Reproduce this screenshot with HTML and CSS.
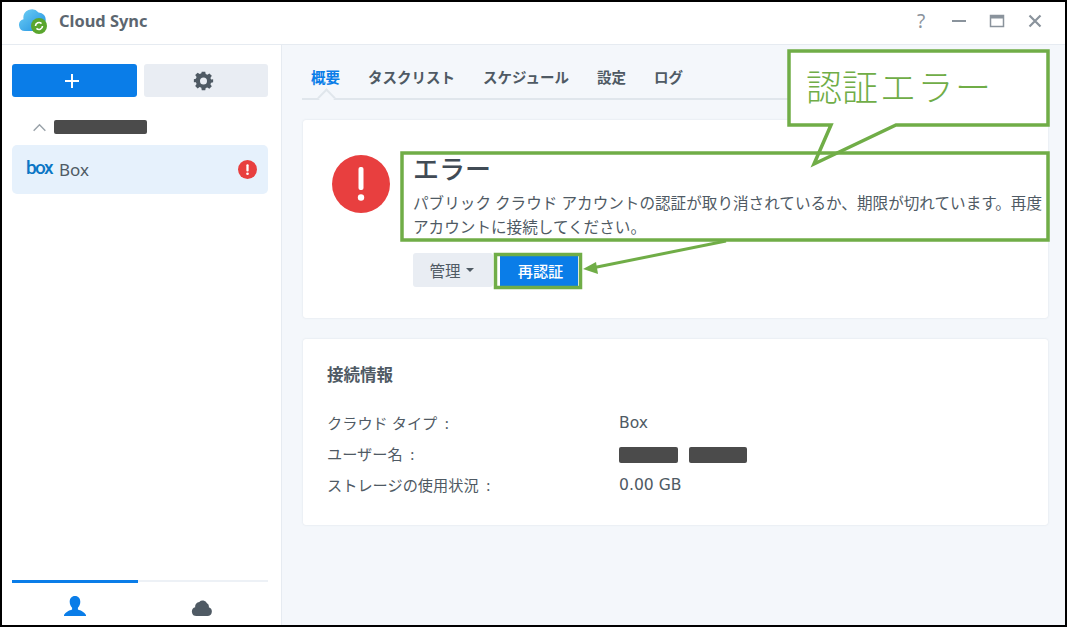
FILE: index.html
```html
<!DOCTYPE html>
<html lang="ja">
<head>
<meta charset="utf-8">
<title>Cloud Sync</title>
<link rel="stylesheet" href="styles.css">
</head>
<body>
<div class="stage">
  <div class="window">
    <header class="titlebar">
      <div class="brand">
        <svg class="logo" viewBox="0 0 32 28" width="32" height="28">
          <defs><linearGradient id="cl" x1="0" y1="0" x2="1" y2="1"><stop offset="0" stop-color="#6fd0f5"/><stop offset="1" stop-color="#1f8fe0"/></linearGradient></defs>
          <path d="M7 23a6 6 0 0 1-1.500-11.800A8.500 8.500 0 0 1 20.500 4.500 7 7 0 0 1 27.500 13c0 6-3 10-7 10z" fill="url(#cl)"/>
          <circle cx="21" cy="18" r="8" fill="#5aa62e"/>
          <path d="M17.500 18a3.500 3.500 0 0 1 6-2.400M24.500 18a3.500 3.500 0 0 1-6 2.400" fill="none" stroke="#fff" stroke-width="1.600"/>
        </svg>
        <span class="app-name">Cloud Sync</span>
      </div>
      <div class="controls">
        <span class="help">?</span>
        <svg class="ctl" viewBox="0 0 16 16" width="16" height="16"><rect x="1" y="7" width="14" height="2" fill="#8a939c"/></svg>
        <svg class="ctl" viewBox="0 0 16 16" width="16" height="16"><path d="M1.500 2.500h13v11h-13z" fill="none" stroke="#8a939c" stroke-width="1.500"/><rect x="1.500" y="2.500" width="13" height="3" fill="#8a939c"/></svg>
        <svg class="ctl" viewBox="0 0 16 16" width="16" height="16"><path d="M2.500 2.500l11 11M13.500 2.500l-11 11" stroke="#8a939c" stroke-width="2.200"/></svg>
      </div>
    </header>
    <div class="content">
      <aside class="sidebar">
        <div class="side-top">
          <div class="side-actions">
            <button class="btn-add"><svg viewBox="0 0 16 16" width="16" height="16"><path d="M8 1v14M1 8h14" stroke="#fff" stroke-width="2"/></svg></button>
            <button class="btn-gear">
              <svg viewBox="0 0 24 24" width="21" height="21"><path fill="#4f5a64" fill-rule="evenodd" d="M10 2h4l.5 2.700 1.900.8 2.300-1.600 2.800 2.800-1.600 2.300.8 1.900L23 10.500v3.500l-2.300.5-.8 1.900 1.600 2.300-2.800 2.800-2.300-1.600-1.900.8L14 23h-4l-.5-2.800-1.900-.8-2.300 1.600-2.800-2.800 1.600-2.300-.8-1.900L1 14v-3.500l2.300-.5.8-1.900-1.600-2.300 2.800-2.800 2.300 1.600 1.900-.8zM12 8.500a4 4 0 1 0 0 8 4 4 0 0 0 0-8z"/></svg>
            </button>
          </div>
          <div class="tree-head">
            <svg viewBox="0 0 16 10" width="15" height="9"><path d="M1.500 8.500L8 2l6.500 6.500" fill="none" stroke="#9aa2a9" stroke-width="1.600"/></svg>
            <span class="redact redact-side"></span>
          </div>
          <div class="tree-item">
            <span class="box-logo">box</span>
            <span class="tree-label">Box</span>
            <svg class="tree-alert" viewBox="0 0 20 20" width="19" height="19"><circle cx="10" cy="10" r="10" fill="#e83f3f"/><rect x="8.800" y="4.500" width="2.400" height="7.500" rx="1" fill="#fff"/><circle cx="10" cy="14.500" r="1.400" fill="#fff"/></svg>
          </div>
        </div>
        <nav class="side-tabs">
          <div class="side-tab active">
            <svg viewBox="0 0 24 22" width="24" height="22"><path fill="#0a7de8" d="M12 1c3.400 0 5.300 2.600 5.300 5.800 0 2.400-.9 4.500-2.400 5.900v1.700c2.700 1 6.600 2.400 8.100 5.600v1H1v-1c1.500-3.200 5.400-4.600 8.100-5.600v-1.700C7.600 11.300 6.700 9.200 6.700 6.800 6.700 3.600 8.600 1 12 1z"/></svg>
          </div>
          <div class="side-tab">
            <svg viewBox="0 0 24 22" width="24" height="20"><path fill="#4f5a64" d="M6 21a5 5 0 0 1-1.500-9.800A5 5 0 0 1 9 5.500a5.200 5.200 0 0 1 8.500 1.500 4 4 0 0 1 2 4.300A5 5 0 0 1 18 21z"/></svg>
          </div>
        </nav>
      </aside>
      <main class="main">
        <nav class="tabs">
          <span class="tab active">概要</span>
          <span class="tab">タスクリスト</span>
          <span class="tab">スケジュール</span>
          <span class="tab">設定</span>
          <span class="tab">ログ</span>
        </nav>
        <section class="card card-error">
          <svg class="err-icon" viewBox="0 0 58 58" width="58" height="58"><circle cx="29" cy="29" r="29" fill="#e83f3f"/><rect x="26.500" y="12" width="5" height="23" rx="2" fill="#fff"/><circle cx="29" cy="42.500" r="3.200" fill="#fff"/></svg>
          <div class="err-body">
            <h1 class="err-title">エラー</h1>
            <p class="err-text">パブリック クラウド アカウントの認証が取り消されているか、期限が切れています。再度<br>アカウントに接続してください。</p>
            <div class="err-actions">
              <button class="btn-manage">管理<i class="caret"></i></button>
              <button class="btn-reauth">再認証</button>
            </div>
          </div>
        </section>
        <section class="card card-info">
          <h2 class="info-title">接続情報</h2>
          <dl class="info-grid">
            <dt>クラウド タイプ&ensp;:</dt><dd>Box</dd>
            <dt>ユーザー名&ensp;:</dt><dd class="user"><span class="redact redact-a"></span><span class="redact redact-b"></span></dd>
            <dt>ストレージの使用状況&ensp;:</dt><dd>0.00 GB</dd>
          </dl>
        </section>
      </main>
    </div>
  </div>
  <svg class="annot" viewBox="0 0 1067 627" width="1067" height="627">
    <path d="M789 51H1048V125H896L814 164L831 125H789Z" fill="#fff" stroke="#70ad47" stroke-width="3.500"/>
    <rect x="402" y="153" width="646" height="87" fill="none" stroke="#70ad47" stroke-width="3.500"/>
    <rect x="495.500" y="254.500" width="85" height="33" fill="none" stroke="#70ad47" stroke-width="3.500"/>
    <path d="M726 241L592 268" stroke="#70ad47" stroke-width="3"/>
    <path d="M583 269L596 262L598 274Z" fill="#70ad47"/>
  </svg>
  <div class="callout-text">認証<span class="kata">エラー</span></div>
</div>
</body>
</html>
```

FILE: styles.css
```css
* { box-sizing: border-box; }
html, body { margin: 0; padding: 0; }
body {
  font-family: "Noto Sans", "Noto Sans CJK JP", sans-serif;
  color: #4f5a64;
  background: #fff;
}
button { font-family: inherit; border: 0; padding: 0; }

.stage { position: relative; width: 1067px; height: 627px; overflow: hidden; }
.window {
  width: 1067px; height: 627px;
  border: 2px solid #000;
  display: flex; flex-direction: column;
  background: #fff;
}

.titlebar {
  height: 43px; flex: none;
  display: flex; align-items: center; justify-content: space-between;
  border-bottom: 1px solid #e6ebf1;
  padding: 0 22px 5px 16px;
}
.brand { display: flex; align-items: center; gap: 9px; }
.logo { display: block; margin-top: 2px; }
.app-name { font-size: 16.400px; font-weight: 700; color: #5c6670; }
.controls { display: flex; align-items: center; gap: 22px; }
.help { font-size: 19px; color: #8a939c; width: 16px; text-align: center; line-height: 16px; }
.ctl { display: block; }

.content { flex: 1; display: flex; min-height: 0; }
.sidebar {
  width: 280px; flex: none;
  border-right: 1px solid #e6ebf1;
  padding: 19px 13px 0 10px;
  display: flex; flex-direction: column; justify-content: space-between;
  background: #fff;
}
.side-actions { display: flex; gap: 7px; }
.btn-add, .btn-gear {
  width: 125px; height: 33px; border-radius: 3px;
  display: flex; align-items: center; justify-content: center;
  padding-right: 5px;
}
.btn-add { background: #0a7de8; }
.btn-gear { background: #e9edf3; width: 124px; }
.tree-head { display: flex; align-items: center; gap: 7px; height: 48px; padding: 12px 0 0 20px; }
.redact { display: inline-block; background: #4b4b4b; border-radius: 2px; filter: blur(.6px); }
.redact-side { width: 93px; height: 14px; }
.tree-item {
  height: 49px;
  background: #e6f1fc; border-radius: 5px;
  display: flex; align-items: center;
  padding: 0 11px 0 14px;
}
.box-logo { font-family: "Roboto", sans-serif; font-size: 19px; line-height: 20px; font-weight: 500; letter-spacing: -1.600px; color: #0b76c5; position: relative; top: -2px; }
.tree-label { font-size: 17px; margin-left: 7px; flex: 1; color: #4f5a64; }
.side-tabs { display: flex; height: 45px; border-top: 2px solid #edf1f6; }
.side-tab { flex: 1; display: flex; justify-content: center; align-items: flex-end; padding: 0 3px 8px 0; margin-top: -2px; border-top: 3px solid transparent; }
.side-tab.active { flex: 0 0 126px; padding: 0 0 8px; border-top-color: #0a7de8; }

.main { flex: 1; min-width: 0; background: #f4f7fb; padding: 0 17px 0 20px; }
.tabs {
  height: 55px; display: flex; align-items: center; gap: 28px;
  border-bottom: 2px solid #e0e6ec; padding: 10px 0 0 9px;
  position: relative; margin-bottom: 20px;
}
.tab { font-size: 14.500px; font-weight: 700; color: #4f5a64; line-height: 20px; }
.tab.active { color: #0a7de8; position: relative; }
.tab.active::after {
  content: ""; position: absolute; left: 9px; bottom: -17px;
  width: 11px; height: 11px; background: #f4f7fb;
  border: solid #e0e6ec; border-width: 2px 0 0 2px;
  transform: rotate(45deg);
}

.card {
  margin-left: 1px; background: #fff; border-radius: 3px;
  box-shadow: 0 0 2px rgba(90,110,130,.18);
}
.card-error { height: 198px; display: flex; padding: 35px 0 0 29px; gap: 23px; margin-bottom: 21px; }
.err-icon { flex: none; }
.err-body { flex: 1; min-width: 0; margin-top: -3px; }
.err-title { margin: 0; font-size: 26px; line-height: 34px; font-weight: 500; color: #414b55; }
.err-text { margin: 0; padding-top: 5px; font-size: 15.600px; line-height: 24px; color: #4f5a64; white-space: nowrap; }
.err-actions { display: flex; gap: 7px; margin-top: 14px; }
.btn-manage {
  width: 80px; height: 34px; border-radius: 3px; background: #e9edf3;
  color: #4f5a64; font-size: 15.500px;
  display: flex; align-items: center; justify-content: center; gap: 5px; padding-right: 3px;
}
.caret { display: block; width: 0; height: 0; border: 4px solid transparent; border-top-color: #4f5a64; border-bottom-width: 0; }
.btn-reauth { width: 78px; height: 34px; padding-left: 3px; background: #0a7de8; color: #fff; font-size: 15.200px; font-weight: 500; }

.card-info { height: 186px; padding: 24px 24px 0; }
.info-title { margin: 0; font-size: 16.500px; line-height: 24px; font-weight: 700; color: #4f5a64; }
.info-grid { margin: 20px 0 0; display: grid; grid-template-columns: 292px 1fr; grid-auto-rows: 31px; align-items: center; font-size: 15.200px; }
.info-grid dt, .info-grid dd { margin: 0; line-height: 24px; }
.info-grid dd { font-family: "DejaVu Sans", sans-serif; font-size: 15.600px; }
.user { display: flex; gap: 11px; }
.redact-a { width: 59px; height: 16px; margin-top: 3px; }
.redact-b { width: 58px; height: 16px; margin-top: 3px; }

.annot { position: absolute; left: 0; top: 0; pointer-events: none; }
.callout-text {
  position: absolute; left: 806px; top: 62px;
  font-size: 36px; line-height: 52px; font-weight: 300; color: #70ad47;
  white-space: nowrap;
}
.kata { margin-left: 2px; letter-spacing: 1.500px; }
```
